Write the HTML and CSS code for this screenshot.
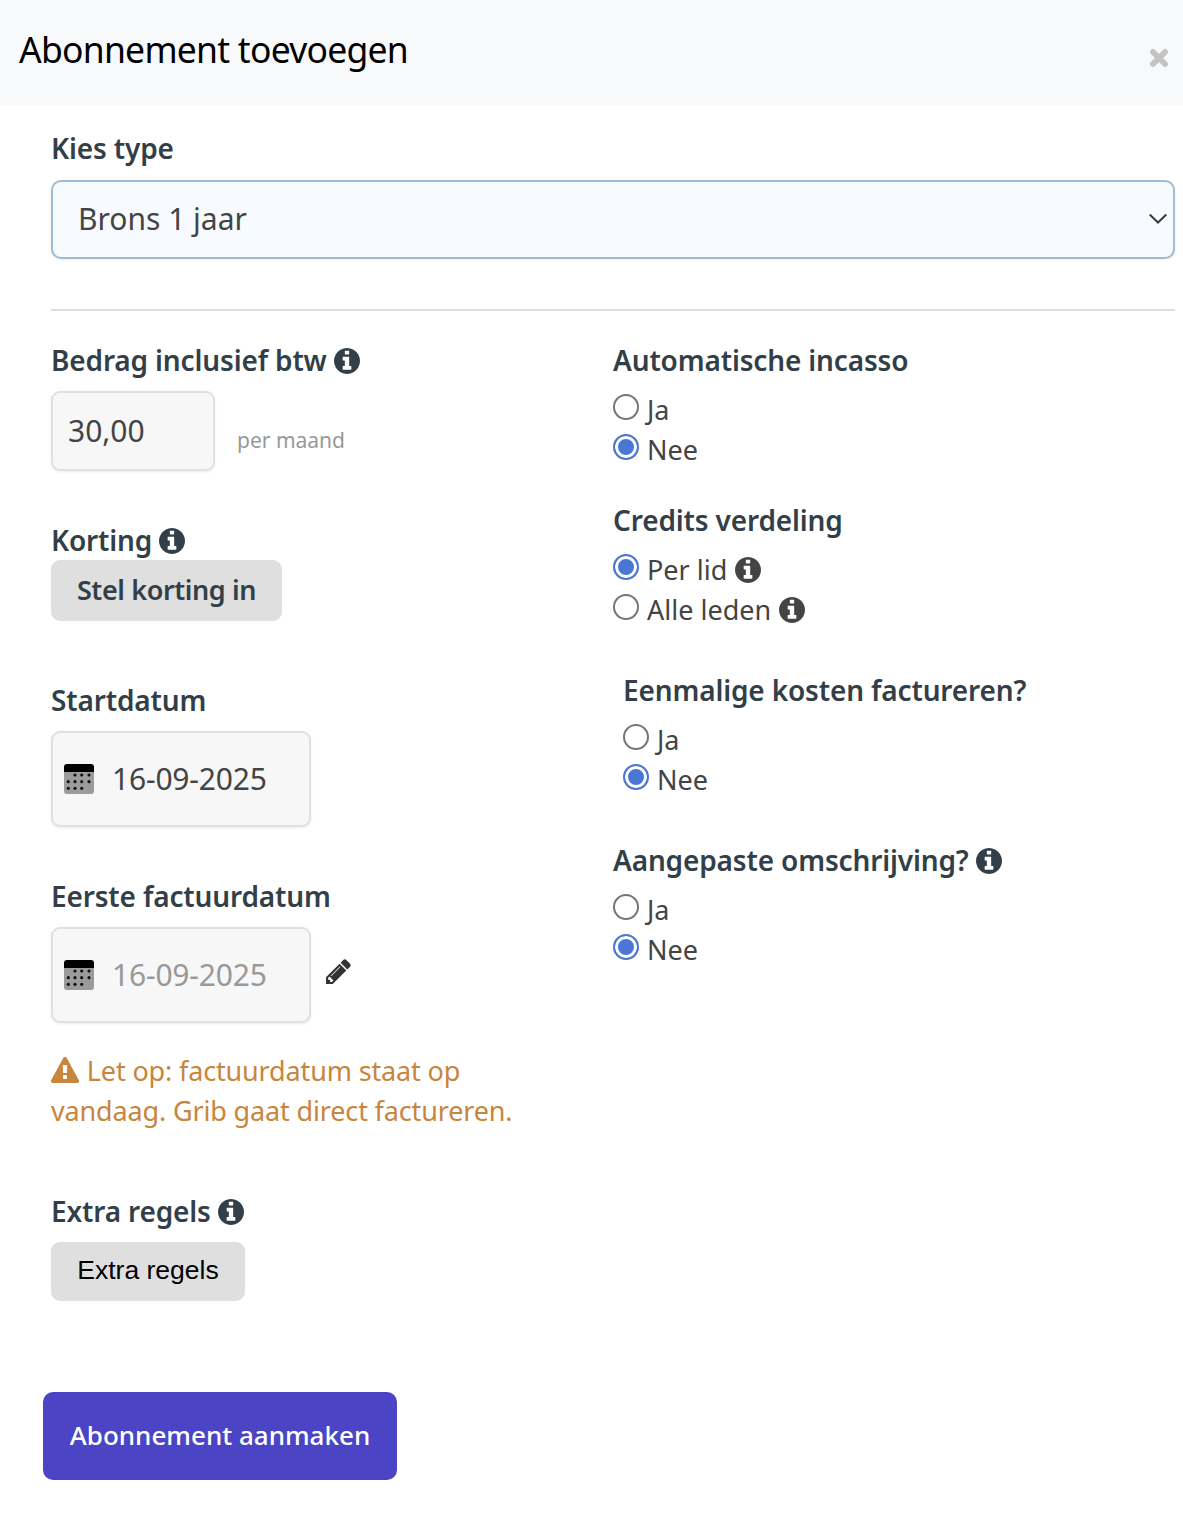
FILE: index.html
```html
<!DOCTYPE html>
<html lang="nl">
<head>
<meta charset="utf-8">
<title>Abonnement toevoegen</title>
<link rel="stylesheet" href="styles.css">
</head>
<body>
<svg class="defs" width="0" height="0" aria-hidden="true">
  <symbol id="i-info" viewBox="128 128 1536 1536"><path fill="currentColor" d="M1152 1376v-160q0-14-9-23t-23-9h-96v-512q0-14-9-23t-23-9h-320q-14 0-23 9t-9 23v160q0 14 9 23t23 9h96v320h-96q-14 0-23 9t-9 23v160q0 14 9 23t23 9h448q14 0 23-9t9-23zm-128-896v-160q0-14-9-23t-23-9h-192q-14 0-23 9t-9 23v160q0 14 9 23t23 9h192q14 0 23-9t9-23zm640 416q0 209-103 385.500t-279.500 279.500-385.500 103-385.500-103-279.500-279.500-103-385.500 103-385.500 279.500-279.500 385.500-103 385.500 103 279.500 279.500 103 385.500z"/></symbol>
  <symbol id="i-cal" viewBox="0 0 30 30">
    <path fill="#9b9b9b" d="M0 8h30v19a3 3 0 0 1-3 3H3a3 3 0 0 1-3-3z"/>
    <path fill="#000" d="M3 0h24a3 3 0 0 1 3 3v5H0V3a3 3 0 0 1 3-3z"/>
    <g fill="#111">
      <circle cx="11" cy="11" r="1.600"/><circle cx="17.700" cy="11" r="1.600"/><circle cx="25" cy="11" r="1.600"/>
      <circle cx="4.300" cy="17.700" r="1.600"/><circle cx="11" cy="17.700" r="1.600"/><circle cx="17.700" cy="17.700" r="1.600"/><circle cx="25" cy="17.700" r="1.600"/>
      <circle cx="4.300" cy="24.300" r="1.600"/><circle cx="11" cy="24.300" r="1.600"/><circle cx="17.700" cy="24.300" r="1.600"/>
    </g>
  </symbol>
</svg>

<header class="modal-head">
  <h1 class="modal-title">Abonnement toevoegen</h1>
  <svg class="close" viewBox="0 0 20 20" aria-label="Sluiten"><path d="M4 4l12 12M16 4L4 16" stroke="#c4c4c4" stroke-width="6" stroke-linecap="round" fill="none"/></svg>
</header>

<main class="modal-body">
  <section class="type-block">
    <label class="label">Kies type</label>
    <div class="select-wrap">
      <select class="select"><option>Brons 1 jaar</option></select>
      <svg class="chevron" viewBox="0 0 18 12"><path d="M.7 1.500L9 9.500l8.300-8" stroke="#3a3a3a" stroke-width="2" fill="none"/></svg>
    </div>
  </section>

  <hr class="rule">

  <div class="columns">
    <div class="col">
      <div class="group">
        <div class="label">Bedrag inclusief btw <svg class="info"><use href="#i-info"/></svg></div>
        <div class="amount-row">
          <input class="field amount" type="text" value="30,00">
          <span class="hint">per maand</span>
        </div>
      </div>

      <div class="group g-korting">
        <div class="label">Korting <svg class="info"><use href="#i-info"/></svg></div>
        <button class="btn-grey" type="button">Stel korting in</button>
      </div>

      <div class="group g-start">
        <div class="label">Startdatum</div>
        <div class="date-row">
          <div class="field date"><svg class="cal"><use href="#i-cal"/></svg><span>16-09-2025</span></div>
        </div>
      </div>

      <div class="group g-first">
        <div class="label">Eerste factuurdatum</div>
        <div class="date-row">
          <div class="field date muted"><svg class="cal"><use href="#i-cal"/></svg><span>16-09-2025</span></div>
          <svg class="pencil" viewBox="128 128 1536 1536"><path fill="#333" d="M491 1536l91-91-235-235-91 91v107h128v128h107zm523-928q0-22-22-22-10 0-17 7l-542 542q-7 7-7 17 0 22 22 22 10 0 17-7l542-542q7-7 7-17zm-54-192l416 416-832 832h-416v-416zm683 96q0 53-37 90l-166 166-416-416 166-165q36-38 90-38 53 0 91 38l235 234q37 39 37 91z"/></svg>
        </div>
        <p class="warning"><svg class="warn-icon" viewBox="0 0 1792 1664"><path fill="currentColor" d="M1024 1375v-190q0-14-9.500-23.500t-22.500-9.500h-192q-13 0-22.500 9.500t-9.500 23.500v190q0 14 9.500 23.500t22.500 9.500h192q13 0 22.500-9.500t9.500-23.500zm-2-374l18-459q0-12-10-19-13-11-24-11h-220q-11 0-24 11-10 7-10 21l17 457q0 10 10 16.500t24 6.500h185q14 0 23.500-6.500t10.500-16.500zm-14-934l768 1408q35 63-2 126-17 29-46.500 46t-63.500 17h-1536q-34 0-63.500-17t-46.500-46q-37-63-2-126l768-1408q17-31 47-49t65-18 65 18 47 49z"/></svg> Let op: factuurdatum staat op vandaag. Grib gaat direct factureren.</p>
      </div>

      <div class="group g-extra">
        <div class="label">Extra regels <svg class="info"><use href="#i-info"/></svg></div>
        <button class="btn-plain" type="button">Extra regels</button>
      </div>
    </div>

    <div class="col">
      <div class="group">
        <div class="label">Automatische incasso</div>
        <div class="radios">
          <label class="radio"><input type="radio" name="a"> Ja</label>
          <label class="radio"><input type="radio" name="a" checked> Nee</label>
        </div>
      </div>
      <div class="group g-r">
        <div class="label">Credits verdeling</div>
        <div class="radios">
          <label class="radio"><input type="radio" name="b" checked> Per lid <svg class="info"><use href="#i-info"/></svg></label>
          <label class="radio"><input type="radio" name="b"> Alle leden <svg class="info"><use href="#i-info"/></svg></label>
        </div>
      </div>
      <div class="group g-r2 indented">
        <div class="label">Eenmalige kosten factureren?</div>
        <div class="radios">
          <label class="radio"><input type="radio" name="c"> Ja</label>
          <label class="radio"><input type="radio" name="c" checked> Nee</label>
        </div>
      </div>
      <div class="group g-r2">
        <div class="label">Aangepaste omschrijving? <svg class="info"><use href="#i-info"/></svg></div>
        <div class="radios">
          <label class="radio"><input type="radio" name="d"> Ja</label>
          <label class="radio"><input type="radio" name="d" checked> Nee</label>
        </div>
      </div>
    </div>
  </div>

  <button class="btn-primary" type="button">Abonnement aanmaken</button>
</main>
</body>
</html>
```

FILE: styles.css
```css
* { box-sizing: border-box; }
html, body { margin: 0; padding: 0; background: #fff; }
body {
  width: 1183px;
  height: 1514px;
  overflow: hidden;
  font-family: "Noto Sans", sans-serif;
  font-size: 27px;
  line-height: 40px;
  color: #444;
}
.defs { position: absolute; }

.modal-head {
  height: 105px;
  background: #f8f9fb;
  display: flex;
  justify-content: space-between;
  padding: 29px 14px 0 19px;
}
.modal-title {
  margin: 0;
  font-size: 35.5px;
  line-height: 40px;
  font-weight: 400;
  color: #000;
  letter-spacing: -0.75px;
}
.close { width: 20px; height: 20px; margin-top: 19px; }

.modal-body { padding: 24px 8px 0 51px; }
.label {
  display: block;
  font-weight: 600;
  color: #333f48;
  font-size: 28px;
  line-height: 38px;
  padding-bottom: 2px;
  letter-spacing: -0.15px;
  white-space: nowrap;
}
.info {
  width: 26px;
  height: 26px;
  vertical-align: -3px;
  color: inherit;
}

.select-wrap { position: relative; margin-top: 11px; }
.select {
  display: block;
  width: 100%;
  height: 79px;
  appearance: none;
  border: 2px solid #a3bbd0;
  border-radius: 10px;
  background: #f7fbff;
  color: #444;
  padding: 0 25px 2px;
  font: 400 30px "Noto Sans", sans-serif;
  box-shadow: 0 1px 3px rgba(0,0,0,.08);
}
.chevron {
  position: absolute;
  right: 8px;
  top: 33px;
  width: 18px;
  height: 12px;
}
.rule {
  border: 0;
  height: 2px;
  background: #ddd;
  margin: 50px 0 30px;
}

.columns { display: grid; grid-template-columns: 562px 562px; }
.field {
  background: #f7f7f7;
  border: 2px solid #e0e0e0;
  border-radius: 9px;
  box-shadow: 0 1px 3px rgba(0,0,0,.08);
  color: #444;
  font: 400 30px "Noto Sans", sans-serif;
}
.amount-row { display: flex; align-items: flex-end; gap: 22px; margin-top: 10px; }
.amount { width: 164px; height: 80px; padding: 0 15px 2px; }
.hint { font-size: 21px; line-height: 30px; color: #999; margin-bottom: 16px; }

.g-korting { margin-top: 50px; }
.btn-grey {
  display: block;
  margin-top: -1px;
  width: 231px;
  height: 61px;
  border: 0;
  border-radius: 9px;
  background: #dfdfdf;
  color: #333f48;
  font: 600 27px "Noto Sans", sans-serif;
  letter-spacing: -0.4px;
  padding: 0 0 2px;
}
.g-start { margin-top: 60px; }
.date-row { display: flex; align-items: center; gap: 15px; margin-top: 10px; }
.date {
  width: 260px;
  height: 96px;
  display: flex;
  align-items: center;
  gap: 18px;
  padding: 0 0 0 11px;
  letter-spacing: -0.2px;
}
.date span { margin-top: -2px; }
.muted { color: #999; }
.cal { width: 30px; height: 30px; flex: none; }
.pencil { width: 25px; height: 25px; margin-bottom: 7px; }
.g-first { margin-top: 50px; }
.warning {
  margin: 28px 0 0;
  width: 490px;
  color: #c8853c;
  letter-spacing: -0.15px;
}
.warn-icon { width: 28px; height: 26px; vertical-align: -2px; margin-right: 1px; }
.g-extra { margin-top: 61px; }
.btn-plain {
  display: block;
  margin-top: 10px;
  width: 194px;
  height: 59px;
  border: 0;
  border-radius: 9px;
  background: #dfdfdf;
  color: #000;
  font: 400 26.5px "Liberation Sans", sans-serif;
  padding: 0 0 2px;
}

.radios { margin-top: 10px; }
.radio {
  display: flex;
  align-items: center;
  gap: 8px;
  height: 40px;
  padding-bottom: 2px;
  white-space: nowrap;
}
.radio input {
  appearance: none;
  width: 26px;
  height: 26px;
  margin: -6px 0 0;
  flex: none;
  border: 2px solid #767676;
  border-radius: 50%;
  background: #fff;
}
.radio input:checked {
  border-color: #4a76d4;
  background: #4a76d4;
  box-shadow: inset 0 0 0 3px #fff;
}
.g-r { margin-top: 30px; }
.g-r2 { margin-top: 40px; }
.indented { padding-left: 10px; }

.btn-primary {
  display: block;
  margin: 91px 0 0 -8px;
  width: 354px;
  height: 88px;
  border: 0;
  border-radius: 10px;
  background: #4b45c6;
  color: #fff;
  font: 500 26px "Noto Sans", sans-serif;
  padding: 0 0 3px;
}
```
